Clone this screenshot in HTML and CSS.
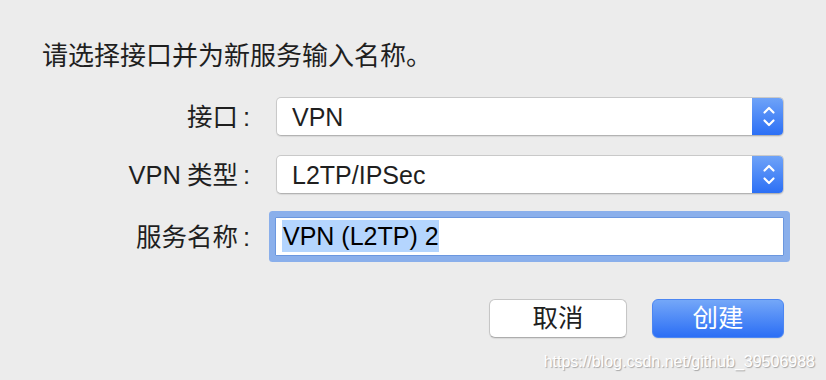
FILE: index.html
```html
<!DOCTYPE html>
<html lang="zh-CN">
<head>
    <meta charset="UTF-8">
    <meta name="viewport" content="width=device-width, initial-scale=1.0">
    <title>新服务</title>
    <link rel="stylesheet" href="styles.css">
</head>
<body>
    <div class="dialog">
        <p class="prompt">请选择接口并为新服务输入名称。</p>

        <div class="form">
            <div class="field-label">接口<span class="colon">:</span></div>
            <div class="popup">
                <span class="popup-value">VPN</span>
                <span class="stepper">
                    <svg width="32" height="39" viewBox="0 0 32 39">
                        <path d="M12.5 15.5 L17 11 L21.5 15.5" />
                        <path d="M12.5 23.5 L17 28 L21.5 23.5" />
                    </svg>
                </span>
            </div>

            <div class="field-label">VPN<span class="gap"></span>类型<span class="colon">:</span></div>
            <div class="popup">
                <span class="popup-value">L2TP/IPSec</span>
                <span class="stepper">
                    <svg width="32" height="39" viewBox="0 0 32 39">
                        <path d="M12.5 15.5 L17 11 L21.5 15.5" />
                        <path d="M12.5 23.5 L17 28 L21.5 23.5" />
                    </svg>
                </span>
            </div>

            <div class="field-label name-label">服务名称<span class="colon">:</span></div>
            <div class="text-field">
                <span class="selection">VPN (L2TP) 2</span>
            </div>
        </div>

        <div class="buttons">
            <div class="btn">取消</div>
            <div class="btn btn-default">创建</div>
        </div>

        <div class="watermark">https://blog.csdn.net/github_39506988</div>
    </div>
</body>
</html>
```

FILE: styles.css
```css
body {
    margin: 0;
    padding: 0;
    width: 826px;
    height: 380px;
    overflow: hidden;
    background: #ececec;
    font-family: "Liberation Sans", "Noto Sans CJK SC", sans-serif;
    color: #1f1f1f;
}

.dialog {
    padding: 41px 11px 0 42px;
}

.prompt {
    margin: 0;
    font-size: 26px;
    line-height: 30px;
}

.form {
    display: grid;
    grid-template-columns: 209px 508px;
    column-gap: 25px;
    row-gap: 19px;
    align-items: center;
    margin-top: 26px;
}

.field-label {
    text-align: right;
    font-size: 25.5px;
    line-height: 30px;
    padding-right: 1px;
}

.colon {
    padding-left: 5px;
}

.gap {
    display: inline-block;
    width: 6px;
}

.name-label {
    margin-top: 4px;
}

.popup {
    display: flex;
    align-items: center;
    height: 39px;
    box-sizing: border-box;
    background: #fff;
    border: 1px solid #c9c9c9;
    border-bottom-color: #b3b3b3;
    border-radius: 5px;
    box-shadow: 0 1px 1px rgba(0, 0, 0, 0.08);
    overflow: hidden;
}

.popup-value {
    flex: 1;
    padding-left: 15px;
    font-size: 25px;
    line-height: 30px;
}

.stepper {
    width: 32px;
    height: 39px;
    margin: -1px -1px -1px 0;
    background: linear-gradient(#70a4f8, #2a6ef5);
    border-radius: 0 5px 5px 0;
}

.stepper svg {
    display: block;
}

.stepper path {
    fill: none;
    stroke: #fff;
    stroke-width: 2.2;
    stroke-linecap: round;
    stroke-linejoin: round;
}

.text-field {
    margin-top: 4px;
    margin-left: -1px;
    height: 39px;
    box-sizing: border-box;
    background: #fff;
    border: 1px solid #6b97df;
    box-shadow: 0 0 0 6px #8aafeb;
    border-radius: 1px;
    padding: 2px 0 0 6px;
}

.selection {
    display: inline-block;
    background: #b4d5fe;
    color: #000;
    font-size: 25px;
    line-height: 32px;
    padding-left: 1px;
}

.buttons {
    display: flex;
    justify-content: flex-end;
    gap: 25px;
    margin-top: 43px;
    margin-right: 31px;
}

.btn {
    width: 138px;
    height: 39px;
    box-sizing: border-box;
    background: #fff;
    border: 1px solid #c6c6c6;
    border-bottom-color: #adadad;
    border-radius: 6px;
    box-shadow: 0 1px 1px rgba(0, 0, 0, 0.08);
    text-align: center;
    font-size: 25.5px;
    line-height: 36px;
    color: #1f1f1f;
}

.btn-default {
    width: 132px;
    border: 1px solid #4c86f2;
    background: linear-gradient(#74a7f8, #2b6ef5);
    color: #fff;
}

.watermark {
    margin-top: 15px;
    text-align: right;
    font-size: 16px;
    line-height: 18px;
    color: #fff;
    text-shadow: 1px 1px 1px rgba(0, 0, 0, 0.3);
}
```
